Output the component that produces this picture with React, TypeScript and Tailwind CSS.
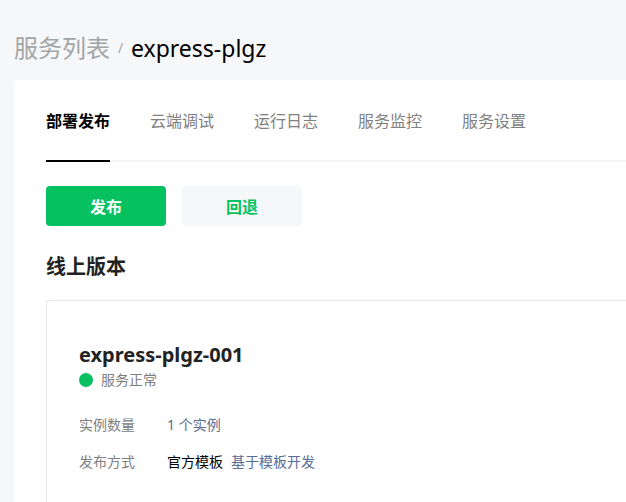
import React from 'react'
import clsx from 'clsx'

interface Tab {
  id: string
  label: string
}

const tabs: Tab[] = [
  { id: 'deploy', label: '部署发布' },
  { id: 'debug', label: '云端调试' },
  { id: 'logs', label: '运行日志' },
  { id: 'monitor', label: '服务监控' },
  { id: 'settings', label: '服务设置' },
]

function Breadcrumb({ service }: { service: string }) {
  return (
    <nav aria-label="Breadcrumb" className="flex items-center pt-8 pb-4 leading-8">
      <a href="#services" className="text-2xl leading-8 text-[#a3a4a6]">
        服务列表
      </a>
      <span className="w-[21px] text-center text-sm leading-8 text-[#a3a4a6]">/</span>
      <h1 className="text-[23px] leading-8 text-black">{service}</h1>
    </nav>
  )
}

function Tabs({ active }: { active: string }) {
  return (
    <nav className="flex gap-10 shadow-[inset_0_-2px_0_#f6f6f6]">
      {tabs.map((tab) => (
        <a
          key={tab.id}
          href={`#${tab.id}`}
          aria-current={tab.id === active ? 'page' : undefined}
          className={clsx(
            'flex h-[82px] items-center border-b-2 pt-0.5 text-base whitespace-nowrap',
            tab.id === active ? 'border-black font-bold text-black' : 'border-transparent text-[#808080]'
          )}
        >
          {tab.label}
        </a>
      ))}
    </nav>
  )
}

/**
 * Card with the version that is live
 */
function VersionCard() {
  return (
    <article className="mt-4 flex-1 rounded-tl border-t border-l border-[#e4e5e7] pt-10 pb-4 pl-8 text-sm">
      <h3 className="text-xl leading-7 font-bold text-[#222222]">express-plgz-001</h3>
      <p className="flex items-center gap-2 leading-[22px] text-[#808080]">
        <span className="size-[14px] rounded-full bg-[#07c160]" />
        服务正常
      </p>
      <dl className="mt-[22px] grid grid-cols-[56px_1fr] gap-x-8 gap-y-[13px] leading-6">
        <dt className="text-[#808080]">实例数量</dt>
        <dd>
          <a href="#instances" className="text-[#576b95]">
            1 个实例
          </a>
        </dd>
        <dt className="text-[#808080]">发布方式</dt>
        <dd className="flex gap-2 text-black">
          官方模板
          <a href="#template" className="text-[#576b95]">
            基于模板开发
          </a>
        </dd>
      </dl>
    </article>
  )
}

export default function App() {
  return (
    <div className="flex min-h-screen flex-col bg-[#f6f7f9] pl-[14px] font-['Noto_Sans','Noto_Sans_CJK_SC',sans-serif]">
      <Breadcrumb service="express-plgz" />
      <main className="flex flex-1 flex-col rounded-tl bg-white pl-8">
        <Tabs active="deploy" />
        <div className="mt-6 flex gap-4 text-base font-bold">
          <button type="button" className="h-10 w-30 rounded bg-[#07c160] pt-0.5 text-white">
            发布
          </button>
          <button type="button" className="h-10 w-30 rounded bg-[#f6f7f9] pt-0.5 text-[#07c160]">
            回退
          </button>
        </div>
        <h2 className="mt-6 text-xl leading-[34px] font-bold text-[#222222]">线上版本</h2>
        <VersionCard />
      </main>
    </div>
  )
}
